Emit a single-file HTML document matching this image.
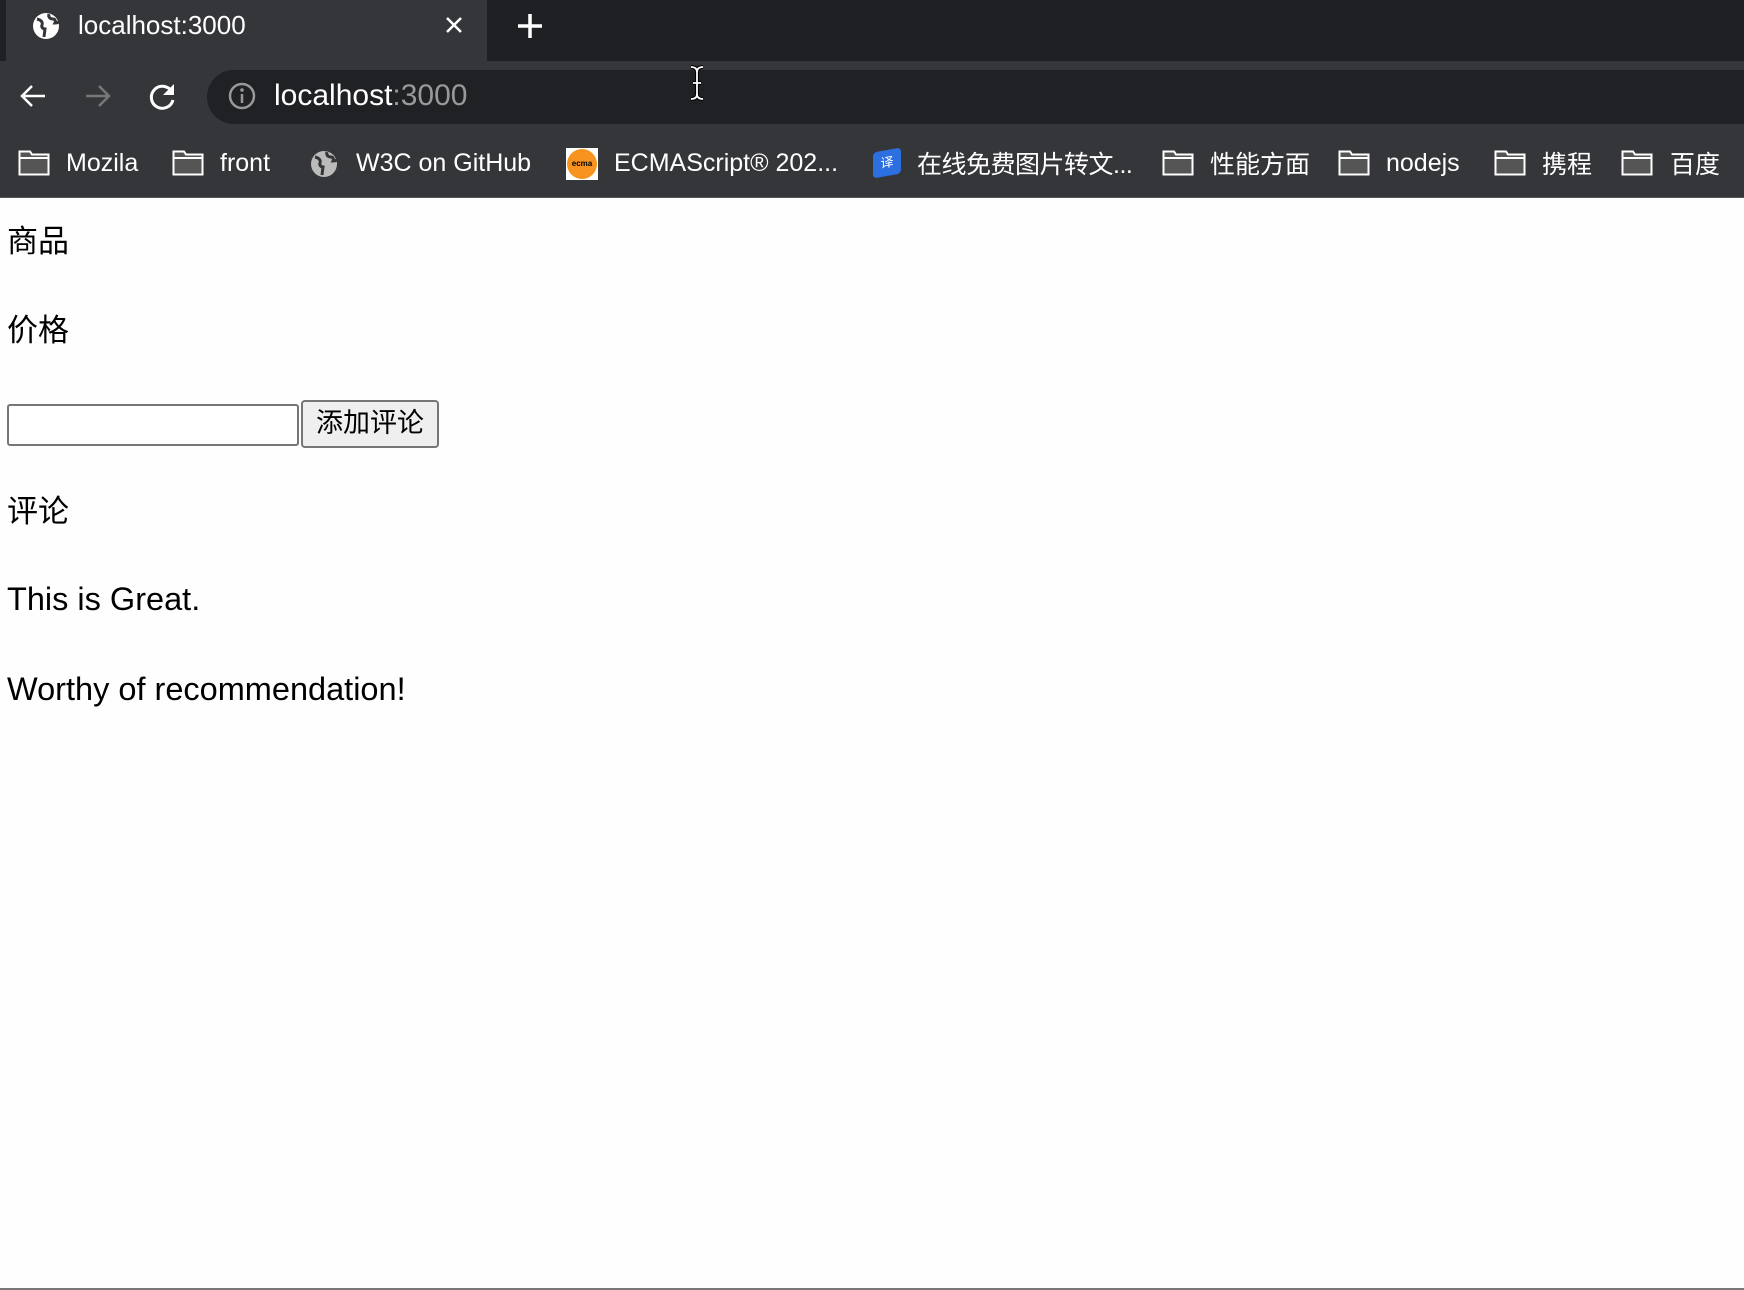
<!DOCTYPE html>
<html><head><meta charset="utf-8"><style>
*{margin:0;padding:0;box-sizing:border-box}
body{width:1744px;height:1290px;background:#fefefe;position:relative;overflow:hidden;font-family:"Liberation Sans","Noto Sans CJK SC",sans-serif;color:#000}
.a{position:absolute;white-space:nowrap}
#top{position:absolute;left:0;top:0;width:1744px;height:62px;background:#1f2023}
#tab{position:absolute;left:6px;top:0;width:481px;height:62px;background:#35363a}
#tool{position:absolute;left:0;top:61px;width:1744px;height:137px;background:#35363a}
#url{position:absolute;left:207px;top:70px;width:1560px;height:54px;background:#202124;border-radius:27px}
#line{position:absolute;left:0;top:197px;width:1744px;height:1px;background:#555}
.w{color:#fff;font-size:25px}
.bm{top:149px}
.cj{top:145px}
.p{font-size:31px;left:7px}
#bot{position:absolute;left:0;top:1288px;width:1744px;height:2px;background:#777}
</style></head><body>
<div id="top"></div>
<div id="tab"></div>
<div id="tool"></div>
<div id="url"></div>
<div id="line"></div>
<svg class="a" style="left:31px;top:11px" width="30" height="30" viewBox="0 0 30 30"><circle cx="15" cy="15" r="13" fill="#fff"/><path d="M6 8c4 1 6 3 5 6-1 2 1 4 3 4l-1 8M18 3c-1 3 1 5 4 5 2 0 3 2 2 4 2 0 4-1 4-1" stroke="#35363a" stroke-width="3" fill="none"/></svg>
<div class="a w" style="left:78px;top:10px;font-size:26px">localhost:3000</div>
<svg class="a" style="left:444px;top:15px" width="20" height="20" viewBox="0 0 20 20"><path d="M3 3L17 17M17 3L3 17" stroke="#fff" stroke-width="2.5"/></svg>
<svg class="a" style="left:517px;top:13px" width="26" height="26" viewBox="0 0 26 26"><path d="M13 1V25M1 13H25" stroke="#fff" stroke-width="3.5"/></svg>
<svg class="a" style="left:19px;top:82px" width="28" height="28" viewBox="0 0 28 28"><path d="M26 14H3M13 4L3 14L13 24" stroke="#fff" stroke-width="2.5" fill="none"/></svg>
<svg class="a" style="left:84px;top:82px" width="28" height="28" viewBox="0 0 28 28"><path d="M2 14H25M15 4L25 14L15 24" stroke="#777" stroke-width="2.5" fill="none"/></svg>
<svg class="a" style="left:148px;top:82px" width="30" height="30" viewBox="0 0 30 30"><path d="M24 10A11 11 0 1 0 25 18" stroke="#fff" stroke-width="3" fill="none"/><path d="M26 2V13H15Z" fill="#fff"/></svg>
<svg class="a" style="left:228px;top:82px" width="28" height="28" viewBox="0 0 28 28"><circle cx="14" cy="14" r="12" stroke="#999" stroke-width="2.5" fill="none"/><path d="M14 12V21" stroke="#999" stroke-width="2.5"/><circle cx="14" cy="8" r="1.8" fill="#999"/></svg>
<div class="a" style="left:274px;top:79px;font-size:30px;color:#fff">localhost<span style="color:#999">:3000</span></div>
<svg class="a" style="left:687px;top:64px" width="20" height="38" viewBox="0 0 20 38"><path d="M4 3Q10 3 10 8V30Q10 35 4 35M16 3Q10 3 10 8V30Q10 35 16 35M6 19H14" stroke="#000" stroke-width="4" fill="none"/><path d="M4 3Q10 3 10 8V30Q10 35 4 35M16 3Q10 3 10 8V30Q10 35 16 35M6 19H14" stroke="#fff" stroke-width="1.8" fill="none"/></svg>
<svg class="a" style="left:18px;top:150px" width="32" height="26" viewBox="0 0 32 26"><path d="M1.5 1.5H12L14 4.5H30.5V24.5H1.5Z" fill="#555" stroke="#fff" stroke-width="2"/><path d="M1.5 8H30.5" stroke="#fff" stroke-width="2"/></svg>
<div class="a w bm" style="left:66px">Mozila</div>
<svg class="a" style="left:172px;top:150px" width="32" height="26" viewBox="0 0 32 26"><path d="M1.5 1.5H12L14 4.5H30.5V24.5H1.5Z" fill="#555" stroke="#fff" stroke-width="2"/><path d="M1.5 8H30.5" stroke="#fff" stroke-width="2"/></svg>
<div class="a w bm" style="left:220px">front</div>
<svg class="a" style="left:309px;top:149px" width="30" height="30" viewBox="0 0 30 30"><circle cx="15" cy="15" r="13" fill="#bbb"/><path d="M6 8c4 1 6 3 5 6-1 2 1 4 3 4l-1 8M18 3c-1 3 1 5 4 5 2 0 3 2 2 4 2 0 4-1 4-1" stroke="#35363a" stroke-width="3" fill="none"/></svg>
<div class="a w bm" style="left:356px">W3C on GitHub</div>
<div class="a" style="left:566px;top:148px;width:32px;height:32px;background:#fff"><div style="margin:1px;width:30px;height:30px;border-radius:50%;background:#f7931e;font-size:8px;line-height:30px;text-align:center;font-weight:bold">ecma</div></div>
<div class="a w bm" style="left:614px">ECMAScript® 202...</div>
<div class="a" style="left:873px;top:150px;width:28px;height:26px;background:#2b6fe0;border-radius:4px;transform:skewY(-10deg);color:#fff;font-size:13px;text-align:center;line-height:26px">译</div>
<div class="a w cj" style="left:917px;letter-spacing:-0.5px">在线免费图片转文...</div>
<svg class="a" style="left:1162px;top:150px" width="32" height="26" viewBox="0 0 32 26"><path d="M1.5 1.5H12L14 4.5H30.5V24.5H1.5Z" fill="#555" stroke="#fff" stroke-width="2"/><path d="M1.5 8H30.5" stroke="#fff" stroke-width="2"/></svg>
<div class="a w cj" style="left:1210px">性能方面</div>
<svg class="a" style="left:1338px;top:150px" width="32" height="26" viewBox="0 0 32 26"><path d="M1.5 1.5H12L14 4.5H30.5V24.5H1.5Z" fill="#555" stroke="#fff" stroke-width="2"/><path d="M1.5 8H30.5" stroke="#fff" stroke-width="2"/></svg>
<div class="a w bm" style="left:1386px">nodejs</div>
<svg class="a" style="left:1494px;top:150px" width="32" height="26" viewBox="0 0 32 26"><path d="M1.5 1.5H12L14 4.5H30.5V24.5H1.5Z" fill="#555" stroke="#fff" stroke-width="2"/><path d="M1.5 8H30.5" stroke="#fff" stroke-width="2"/></svg>
<div class="a w cj" style="left:1542px">携程</div>
<svg class="a" style="left:1621px;top:150px" width="32" height="26" viewBox="0 0 32 26"><path d="M1.5 1.5H12L14 4.5H30.5V24.5H1.5Z" fill="#555" stroke="#fff" stroke-width="2"/><path d="M1.5 8H30.5" stroke="#fff" stroke-width="2"/></svg>
<div class="a w cj" style="left:1670px">百度</div>
<div class="a p" style="top:216px">商品</div>
<div class="a p" style="top:305px">价格</div>
<div class="a" style="left:7px;top:404px;width:292px;height:42px;border:2px solid #767676;border-radius:3px;background:#fff"></div>
<div class="a" style="left:301px;top:400px;width:138px;height:48px;border:2px solid #767676;border-radius:4px;background:#efefef;font-size:27px;text-align:center;line-height:43px">添加评论</div>
<div class="a p" style="top:486px">评论</div>
<div class="a p" style="top:581px;font-size:32.5px">This is Great.</div>
<div class="a p" style="top:671px;font-size:32.5px">Worthy of recommendation!</div>
<div id="bot"></div>
</body></html>
